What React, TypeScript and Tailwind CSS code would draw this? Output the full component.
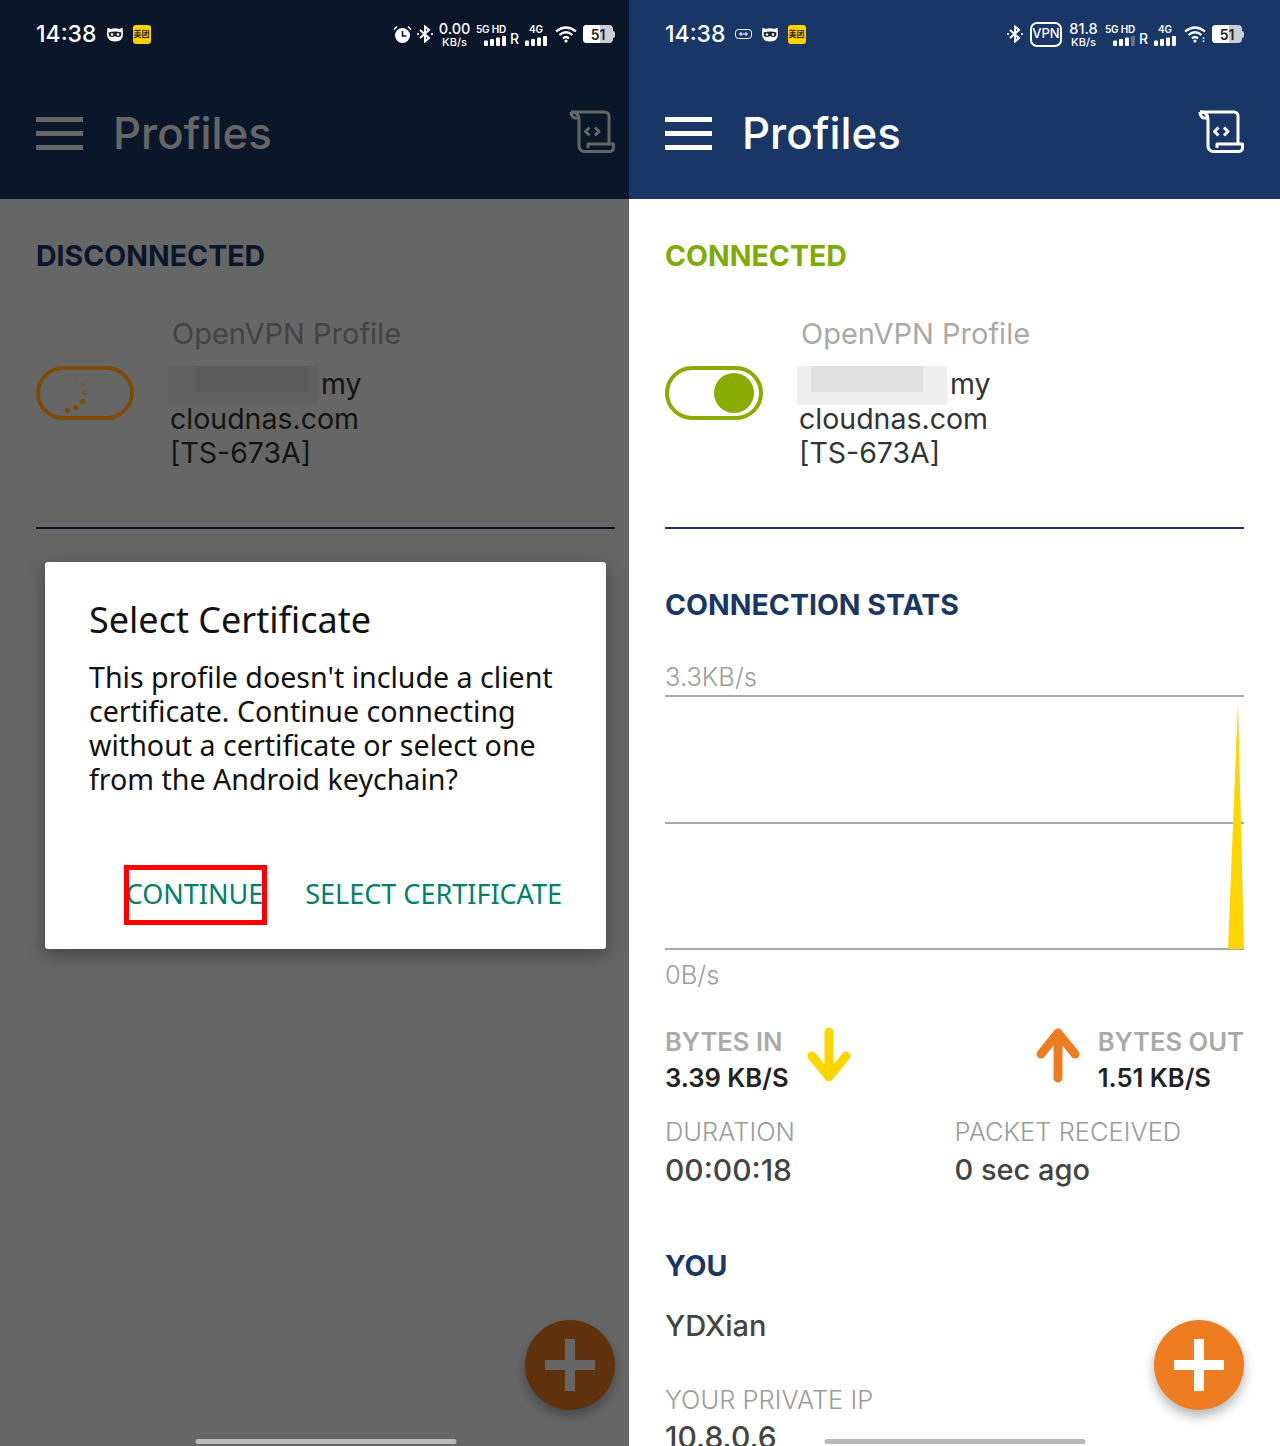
import type { ReactNode } from "react";

const NAVY = "#193766";

function MaskIcon() {
  return (
    <svg width="18" height="16" viewBox="0 0 18 16">
      <path d="M1.500 1.500 L4.500 3 Q9 1.500 13.500 3 L16.500 1.500 L17 8 Q17 15.500 9 15.500 Q1 15.500 1 8 Z" fill="#fff" />
      <path d="M2.500 6.500 Q9 4.500 15.500 6.500 L15 10 Q12 12 9 10 Q6 12 3 10 Z" fill="#1a1f2b" />
      <circle cx="6" cy="8.500" r="1.300" fill="#fff" />
      <circle cx="12" cy="8.500" r="1.300" fill="#fff" />
    </svg>
  );
}

function MeituanIcon() {
  return (
    <span className="flex h-[19px] w-[18px] items-center justify-center rounded-[3px] bg-[#ffd100] font-['Noto_Sans_CJK_SC',sans-serif] text-[8px] leading-none font-bold text-[#2b2100]">
      美团
    </span>
  );
}

function AlarmIcon() {
  return (
    <svg width="19" height="19" viewBox="0 0 19 19">
      <circle cx="9.500" cy="10.500" r="7.500" fill="#fff" />
      <path d="M9.500 6v5h4" fill="none" stroke="#08152a" strokeWidth="1.600" />
      <path d="M1 4.500 4 1.500M18 4.500 15 1.500" stroke="#fff" strokeWidth="1.600" />
    </svg>
  );
}

function BluetoothIcon() {
  return (
    <svg width="16" height="18" viewBox="0 0 16 18" fill="none" stroke="#fff" strokeWidth="2">
      <path d="M3 5 12 13 8 16.500V1.500L12 5 3 13" />
      <circle cx="1" cy="9" r="1.100" fill="#fff" stroke="none" />
      <circle cx="15" cy="9" r="1.100" fill="#fff" stroke="none" />
    </svg>
  );
}

function WifiIcon({ arrows }: { arrows?: boolean }) {
  return (
    <svg width="23" height="18" viewBox="0 0 23 18" fill="none" stroke="#fff" strokeWidth="2.200">
      <path d="M1 6.500Q11 -1.500 21 6.500" />
      <path d="M4.500 10Q11 4.500 17.500 10" />
      <path d="M8 13.400Q11 11 14 13.400" />
      <circle cx="11" cy="16" r="1.600" fill="#fff" stroke="none" />
      {arrows && <path d="M19.500 12.500v1.500M19.500 15.500v1.500" strokeWidth="1.600" />}
    </svg>
  );
}

function Bars({ dim }: { dim?: boolean }) {
  return (
    <svg width="22" height="10" viewBox="0 0 22 10" fill="#fff">
      <rect x="0" y="4.500" width="4" height="5.500" rx="1" />
      <rect x="6" y="3" width="4" height="7" rx="1" />
      <rect x="12" y="1.500" width="4" height="8.500" rx="1" />
      <rect x="18" y="0" width="4" height="10" rx="1" opacity={dim ? 0.3 : 1} />
    </svg>
  );
}

function Battery() {
  return (
    <span className="flex items-center">
      <span className="relative flex h-[18px] w-[30px] items-center justify-center overflow-hidden rounded-[4px] bg-[#c9ced6] text-[14px] font-semibold text-[#222]">
        <span className="absolute inset-y-0 left-0 w-[17px] bg-white" />
        <span className="relative">51</span>
      </span>
      <span className="h-[7px] w-[2px] rounded-r-sm bg-[#c9ced6]" />
    </span>
  );
}

function Network({ speed, icons }: { speed: string; icons: ReactNode }) {
  return (
    <div className="flex items-center text-white">
      {icons}
      <div className="ml-[6px] flex w-[31px] flex-col items-center">
        <span className="text-[14.500px] leading-[15px] font-medium">{speed}</span>
        <span className="text-[11px] leading-[12px] font-medium">KB/s</span>
      </div>
      <div className="ml-[6px] flex w-[30px] flex-col items-end">
        <span className="text-[10px] leading-[13px] font-semibold tracking-[-0.2px] whitespace-nowrap">5G HD</span>
        <Bars dim={speed !== "0.00"} />
      </div>
      <span className="mt-[9px] ml-[4px] w-[9px] text-[14px] leading-none font-medium">R</span>
      <div className="ml-[5px] flex w-[24px] flex-col items-center">
        <span className="text-[10px] leading-[13px] font-semibold">4G</span>
        <Bars />
      </div>
      <span className="ml-[7px]">
        <WifiIcon arrows={speed !== "0.00"} />
      </span>
      <span className="ml-[5px]">
        <Battery />
      </span>
    </div>
  );
}

function StatusBar({ connected }: { connected: boolean }) {
  return (
    <div className="relative z-20 flex h-[68px] items-center justify-between px-[36px] text-white">
      <div className="flex items-center gap-[9px]">
        <span className="text-[23px] leading-none font-medium">14:38</span>
        {connected && (
          <svg width="17" height="10" viewBox="0 0 17 10" fill="none" stroke="#fff" strokeWidth="1">
            <rect x=".5" y=".5" width="16" height="9" rx="3" />
            <path d="M4 5h9M6 3v4M11 3v4" />
          </svg>
        )}
        <MaskIcon />
        <MeituanIcon />
      </div>
      {connected ? (
        <Network
          speed="81.8"
          icons={
            <>
              <BluetoothIcon />
              <span className="ml-[7px] flex h-[25px] w-[32px] items-center justify-center rounded-[7px] border-2 border-white text-[13px] font-medium">
                VPN
              </span>
            </>
          }
        />
      ) : (
        <Network
          speed="0.00"
          icons={
            <>
              <AlarmIcon />
              <span className="ml-[5px]">
                <BluetoothIcon />
              </span>
            </>
          }
        />
      )}
    </div>
  );
}

function ScrollIcon() {
  return (
    <svg width="46" height="43" viewBox="0 0 46 43" fill="none" stroke="#fff" strokeWidth="3" strokeLinejoin="round">
      <path d="M2 2H36a4 4 0 0 1 4 4V33" />
      <path d="M2 2c5 0 8 2 8 7V36a5.500 5.500 0 0 0 5.500 5.500H41a3.500 3.500 0 0 0 3.500-3.500V34H19V38" />
      <path d="M2 2c0 3 2 6 4 6H10" />
      <path d="M20.500 17.500 16.500 21.500 20.500 25.500M26 17.500 30 21.500 26 25.500" />
    </svg>
  );
}

function Toggle({ connected }: { connected: boolean }) {
  if (!connected) {
    // sits over the scrim, the reference keeps it warmer than a plain dim would
    return (
      <div className="relative z-20 mt-[49px] flex h-[54px] w-[98px] shrink-0 items-center justify-center rounded-full border-[4px] border-[#7d4b08]">
        <svg width="40" height="40" viewBox="0 0 40 40" fill="#7d4b08">
          <circle cx="11.500" cy="5.500" r="2.600" opacity=".15" />
          <circle cx="17.500" cy="11.500" r="2.600" opacity=".35" />
          <circle cx="19.500" cy="19.500" r="2.700" opacity=".55" />
          <circle cx="17.500" cy="28.500" r="2.800" opacity=".85" />
          <circle cx="10.500" cy="34.500" r="2.800" />
          <circle cx="2.500" cy="37.500" r="2.800" />
        </svg>
      </div>
    );
  }
  return (
    <div className="mt-[49px] flex h-[54px] w-[98px] shrink-0 items-center justify-end rounded-full border-[4px] border-[#88ad00] pr-[5px]">
      <span className="h-[40px] w-[40px] rounded-full bg-[#88ad00]" />
    </div>
  );
}

function ProfileRow({ connected }: { connected: boolean }) {
  return (
    <div className="flex gap-[36px]">
      <Toggle connected={connected} />
      <div className="text-[28.500px] text-[#333]">
        <div className="ml-[2px] text-[29px] leading-[34px] text-[#a9a9a9]">OpenVPN Profile</div>
        <div className="mt-[15px] flex h-[36px] leading-[36px]">
          <span className="relative -ml-[2px] h-[39px] w-[150px] bg-[#efefef]">
            <span className={`absolute top-0 h-[26px] w-[112px] bg-[#e0e0e0] ${connected ? "left-[14px]" : "left-[28px]"}`} />
          </span>
          <span className="ml-[3px]">my</span>
        </div>
        <div className="leading-[34px]">cloudnas.com</div>
        <div className="leading-[34px]">[TS-673A]</div>
      </div>
    </div>
  );
}

function ArrowIcon({ color, up }: { color: string; up?: boolean }) {
  return (
    <svg
      width="44"
      height="56"
      viewBox="0 0 44 56"
      fill="none"
      stroke={color}
      strokeWidth="9"
      strokeLinecap="round"
      strokeLinejoin="round"
      className={up ? "" : "rotate-180"}
    >
      <path d="M22 6V51M5 27 22 6 39 27" />
    </svg>
  );
}

function Stats() {
  return (
    <>
      <div className="mt-[58px] text-[28.500px] leading-[34px] font-bold text-[#193766]">CONNECTION STATS</div>
      <div className="mt-[39px] text-[25.500px] leading-[32px] font-light text-[#9b9b9b]">3.3KB/s</div>
      <svg width="579" height="255" viewBox="0 0 579 255" className="mt-[2px] block">
        <path d="M0 1H579M0 128H579M0 254H579" stroke="#aaaaaa" strokeWidth="2" />
        <path d="M563 254 573 7 579 254Z" fill="#ffd500" />
      </svg>
      <div className="mt-[9px] text-[25.500px] leading-[32px] font-light text-[#9b9b9b]">0B/s</div>

      <div className="mt-[34px] flex justify-between">
        <div className="flex gap-[18px]">
          <div>
            <div className="text-[25.600px] leading-[34px] font-semibold text-[#aaaaaa]">BYTES IN</div>
            <div className="mt-[2px] text-[25.600px] leading-[34px] font-semibold text-[#222]">3.39 KB/S</div>
          </div>
          <span className="mt-[2px]">
            <ArrowIcon color="#ffd500" />
          </span>
        </div>
        <div className="flex gap-[18px]">
          <span className="mt-[2px]">
            <ArrowIcon color="#ee7c21" up />
          </span>
          <div>
            <div className="text-[25.600px] leading-[34px] font-semibold text-[#aaaaaa]">BYTES OUT</div>
            <div className="mt-[2px] text-[25.600px] leading-[34px] font-semibold text-[#222]">1.51 KB/S</div>
          </div>
        </div>
      </div>

      <div className="mt-[20px] grid grid-cols-2">
        <div>
          <div className="text-[25.500px] leading-[34px] font-light text-[#9b9b9b]">DURATION</div>
          <div className="mt-[2px] text-[30px] leading-[38px] font-medium text-[#444]">00:00:18</div>
        </div>
        <div>
          <div className="text-[25.500px] leading-[34px] font-light text-[#9b9b9b]">PACKET RECEIVED</div>
          <div className="mt-[2px] text-[29px] leading-[38px] font-medium text-[#444]">0 sec ago</div>
        </div>
      </div>

      <div className="mt-[60px] text-[28.500px] leading-[34px] font-bold text-[#193766]">YOU</div>
      <div className="mt-[26px] text-[29px] leading-[34px] font-medium text-[#444]">YDXian</div>
      <div className="mt-[40px] text-[25.500px] leading-[34px] font-light text-[#9b9b9b]">YOUR PRIVATE IP</div>
      <div className="mt-[1px] text-[30px] leading-[38px] font-medium text-[#444]">10.8.0.6</div>
    </>
  );
}

function Phone({ connected, children }: { connected: boolean; children?: ReactNode }) {
  return (
    <div className="relative h-[1446px] w-[651px] shrink-0 overflow-hidden bg-white font-['Inter',sans-serif]">
      <header className="h-[199px]" style={{ backgroundColor: NAVY }}>
        <StatusBar connected={connected} />
        <div className="flex h-[131px] items-center px-[36px] text-white">
          <div className="-mt-[1px] flex w-[47px] flex-col gap-[9px]">
            <span className="h-[5px] bg-white" />
            <span className="h-[5px] bg-white" />
            <span className="h-[5px] bg-white" />
          </div>
          <span className="ml-[30px] text-[43.800px] leading-none font-medium">Profiles</span>
          <span className="mt-[-4px] ml-auto">
            <ScrollIcon />
          </span>
        </div>
      </header>

      <main className="px-[36px] pt-[40px]">
        <div className={`text-[28.500px] leading-[34px] font-bold ${connected ? "text-[#7fab00]" : "text-[#193766]"}`}>
          {connected ? "CONNECTED" : "DISCONNECTED"}
        </div>
        <div className="mt-[44px]">
          <ProfileRow connected={connected} />
        </div>
        <div className="mt-[57px] h-[2px]" style={{ backgroundColor: NAVY }} />
        <div className="h-[1px]" />
        {connected && <Stats />}
      </main>

      <button className="absolute right-[36px] bottom-[36px] flex h-[90px] w-[90px] items-center justify-center rounded-full bg-[#ee7c21] shadow-[0_6px_12px_rgba(0,0,0,0.3)]">
        <svg width="50" height="52" viewBox="0 0 50 52" fill="#fff">
          <path d="M20 0H30V21H50V31H30V52H20V31H0V21H20Z" />
        </svg>
      </button>

      {children}

      <div className="absolute bottom-[2px] left-1/2 z-20 h-[5px] w-[261px] -translate-x-1/2 rounded-full bg-[#b9b9b9]" />
    </div>
  );
}

function CertificateDialog() {
  return (
    <>
      <div className="absolute inset-0 z-10 bg-black/60" />
      <div className="absolute top-[562px] left-[45px] z-20 h-[387px] w-[561px] rounded-[3px] bg-white px-[44px] pt-[34px] font-['Noto_Sans',sans-serif] text-[#111] shadow-[0_6px_20px_rgba(0,0,0,0.35)]">
        <div className="text-[36px] leading-[48px]">Select Certificate</div>
        <p className="mt-[16px] w-[480px] text-[28.600px] leading-[34px]">
          This profile doesn't include a client certificate. Continue connecting without a certificate or select one from the Android keychain?
        </p>
        <div className="mt-[68px] flex justify-end gap-[42px] text-[27px] leading-[60px] text-[#00806b]">
          <div className="relative">
            CONTINUE
            <span className="absolute top-[1px] -right-[4px] -bottom-[1px] -left-[2px] border-[5px] border-[#ff0000]" />
          </div>
          <div>SELECT CERTIFICATE</div>
        </div>
      </div>
    </>
  );
}

export default function App() {
  return (
    <div className="flex h-[1446px] w-[1280px] overflow-hidden">
      <div className="w-[629px] shrink-0 overflow-hidden">
        <Phone connected={false}>
          <CertificateDialog />
        </Phone>
      </div>
      <Phone connected />
    </div>
  );
}
